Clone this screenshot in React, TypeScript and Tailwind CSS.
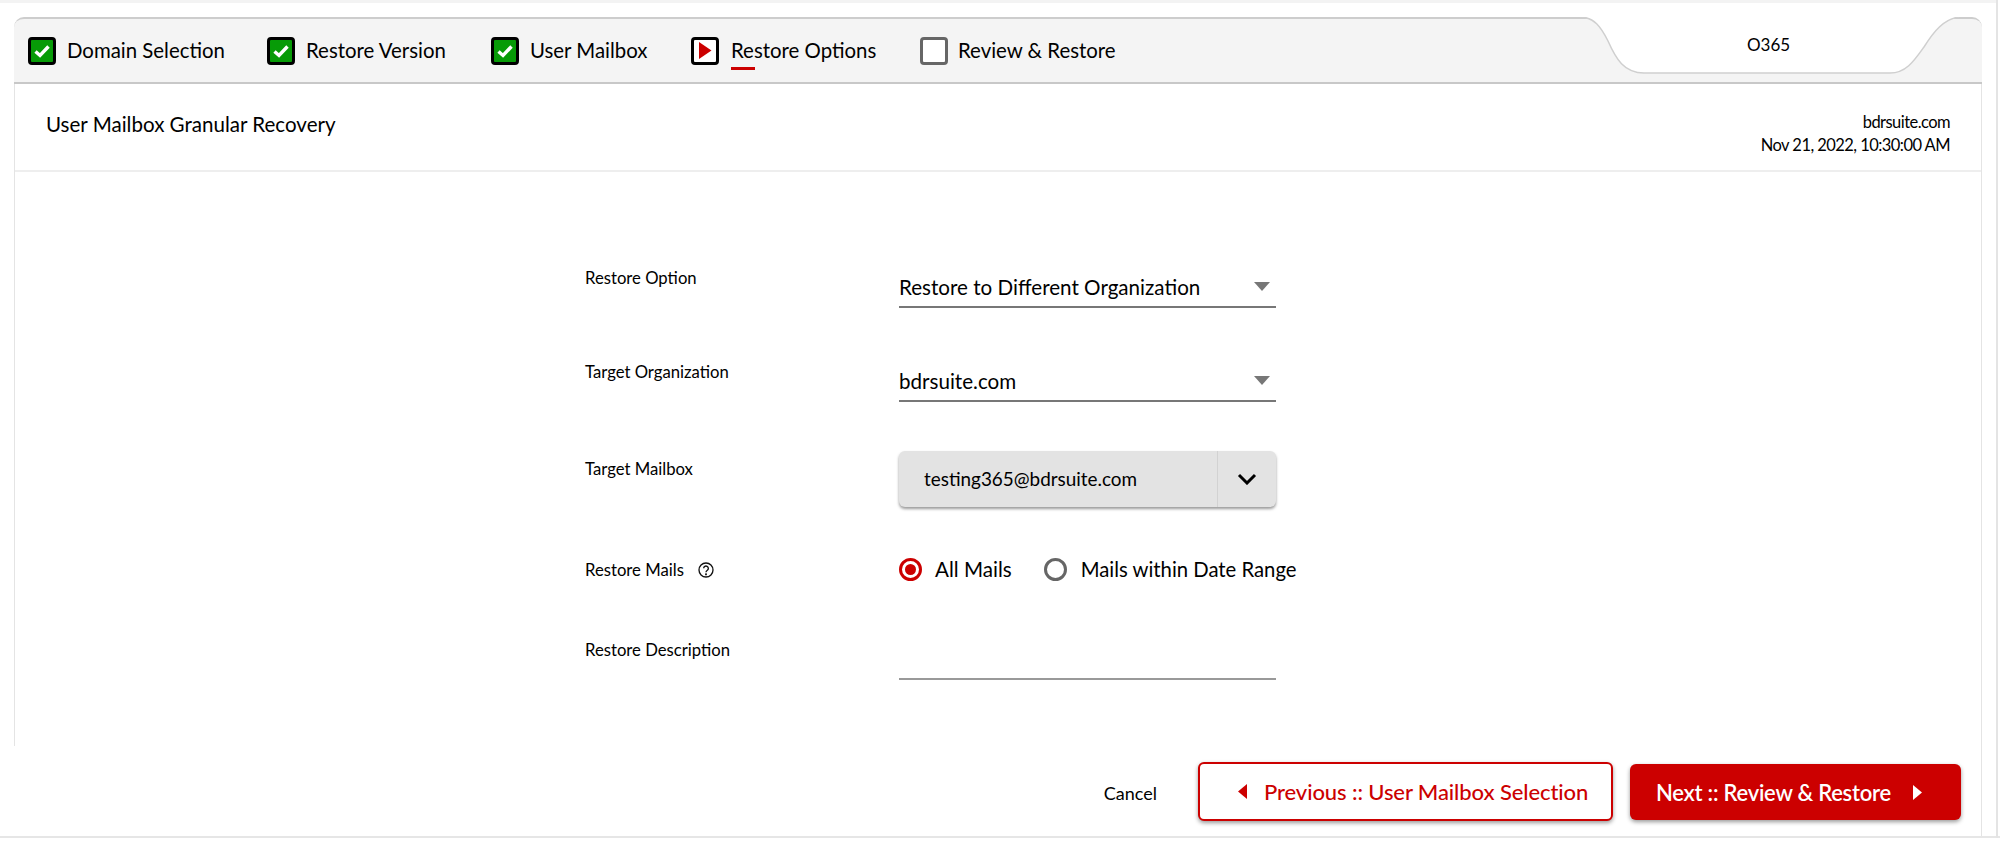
import React from "react";

function Check({ state }: { state: "done" | "active" | "todo" }) {
  if (state === "done")
    return (
      <span className="w-[28px] h-[28px] rounded-[4px] border-[3px] border-black bg-[#079b07] flex items-center justify-center shrink-0">
        <svg width="16" height="14" viewBox="0 0 16 14"><path d="M1.5 7.5 L6 11.5 L14.5 2.5" fill="none" stroke="#fff" strokeWidth="3.4" /></svg>
      </span>
    );
  if (state === "active")
    return (
      <span className="w-[28px] h-[28px] rounded-[4px] border-[3px] border-black bg-white flex items-center justify-center shrink-0">
        <svg width="13" height="17" viewBox="0 0 13 17"><path d="M0 0 L12.5 8.5 L0 17 Z" fill="#cc0000" /></svg>
      </span>
    );
  return <span className="w-[28px] h-[28px] rounded-[4px] border-[3px] border-[#666] bg-white shrink-0" />;
}

function Step({ state, label, className }: { state: "done" | "active" | "todo"; label: string; className: string }) {
  return (
    <div className={"flex items-center " + className}>
      <Check state={state} />
      <span className="relative text-[20.4px] leading-[28px] text-black -mt-[2px]">
        {label}
        {state === "active" && <span className="absolute left-0 top-[31px] w-[24px] h-[3px] bg-[#cc0000]" />}
      </span>
    </div>
  );
}

function Row({ label, labelTop, mt, children }: { label: React.ReactNode; labelTop: string; mt: string; children: React.ReactNode }) {
  return (
    <div className={"flex items-start " + mt}>
      <div className={"ml-[1px] w-[314px] text-[16.7px] leading-[20px] text-black flex items-center " + labelTop}>{label}</div>
      {children}
    </div>
  );
}

function Select({ value }: { value: string }) {
  return (
    <div className="w-[377px] h-[45px] border-b-2 border-[#777] flex items-center justify-between pr-[6px] pt-[4px]">
      <span className="text-[20.6px] leading-[28px] text-black">{value}</span>
      <svg width="16" height="9" viewBox="0 0 16 9"><path d="M0 0 H16 L8 9 Z" fill="#777" /></svg>
    </div>
  );
}

export default function App() {
  return (
    <div className="w-[2000px] h-[843px] bg-white overflow-hidden font-[Lato,sans-serif] flex flex-col relative">
      <div className="h-[3px] w-[1996px] bg-[#f3f3f3] shrink-0" />
      <div className="h-[14px] shrink-0" />
      <div className="ml-[14px] w-[1968px] h-[67px] shrink-0 bg-[#f4f4f4] border-t-2 border-[#cdcdcd] border-b-2 border-b-[#c8c8c8] rounded-t-[10px] relative flex items-center">
        <Step state="done" label="Domain Selection" className="ml-[14px] w-[239px] gap-[11px]" />
        <Step state="done" label="Restore Version" className="w-[224px] gap-[11px]" />
        <Step state="done" label="User Mailbox" className="w-[200px] gap-[11px]" />
        <Step state="active" label="Restore Options" className="w-[229px] gap-[12px]" />
        <Step state="todo" label="Review & Restore" className="gap-[10px]" />
        <svg className="absolute left-[1560px] top-[-2px]" width="400" height="58" viewBox="0 0 400 58">
          <path d="M6 0 C20 0 27 10 34 24 C42 42 50 56 70 56 H316 C332 56 340 44 350 30 C360 14 370 2 385 0 Z" fill="#fff" stroke="none" />
          <path d="M6 0 C20 0 27 10 34 24 C42 42 50 56 70 56 H316 C332 56 340 44 350 30 C360 14 370 2 385 0" fill="none" stroke="#cfcfcf" strokeWidth="1.5" />
        </svg>
        <span className="absolute left-[1733px] top-[16px] w-[42px] text-center text-[17px] leading-[20px] text-black">O365</span>
      </div>
      <div className="ml-[14px] w-[1968px] h-[662px] shrink-0 border-x border-[#e4e4e4]">
        <div className="h-[88px] border-b-2 border-[#eeeeee] flex justify-between pl-[31px] pr-[31px]">
          <span className="text-[20.55px] leading-[28px] text-black mt-[26px]">User Mailbox Granular Recovery</span>
          <div className="text-right text-[16.5px] tracking-[-0.55px] leading-[23px] text-black mt-[27px]">
            <div>bdrsuite.com</div>
            <div>Nov 21, 2022, 10:30:00 AM</div>
          </div>
        </div>
        <div className="pl-[569px] pt-[91px]">
          <Row label="Restore Option" labelTop="pt-[5px]" mt="">
            <Select value="Restore to Different Organization" />
          </Row>
          <Row label="Target Organization" labelTop="pt-[5px]" mt="mt-[49px]">
            <Select value="bdrsuite.com" />
          </Row>
          <Row label="Target Mailbox" labelTop="pt-[8px]" mt="mt-[49px]">
            <div className="w-[377px] h-[56px] rounded-[6px] bg-[#e3e3e3] shadow-[0_2px_3px_rgba(0,0,0,0.4)] flex items-center">
              <span className="flex-1 pl-[25px] text-[18.9px] leading-[26px] text-black">testing365@bdrsuite.com</span>
              <span className="w-[59px] h-full border-l border-[#d2d2d2] flex items-center justify-center">
                <svg width="20" height="12" viewBox="0 0 20 12"><path d="M2 2 L10 10 L18 2" fill="none" stroke="#000" strokeWidth="3" /></svg>
              </span>
            </div>
          </Row>
          <Row
            label={
              <>
                <span>Restore Mails</span>
                <svg className="ml-[14px]" width="16" height="16" viewBox="0 0 24 24" fill="none" stroke="#111" strokeWidth="2"><circle cx="12" cy="12" r="10.5" /><path d="M8.5 9.5a3.5 3.5 0 1 1 5.5 2.9c-1.2.8-2 1.4-2 2.9" /><circle cx="12" cy="18.5" r="0.6" fill="#111" /></svg>
              </>
            }
            labelTop="pt-[0px]"
            mt="mt-[53px]"
          >
            <div className="flex items-center -mt-[3px]">
              <span className="w-[23px] h-[23px] rounded-full border-[3px] border-[#cc0000] flex items-center justify-center">
                <span className="w-[11px] h-[11px] rounded-full bg-[#cc0000]" />
              </span>
              <span className="ml-[13px] text-[20.6px] leading-[24px] text-black">All Mails</span>
              <span className="ml-[32px] w-[23px] h-[23px] rounded-full border-[3px] border-[#666]" />
              <span className="ml-[14px] text-[20.3px] leading-[24px] text-black">Mails within Date Range</span>
            </div>
          </Row>
          <Row label="Restore Description" labelTop="pt-[0px]" mt="mt-[59px]">
            <div className="w-[377px] h-[50px] -mt-[10px] border-b-2 border-[#999]" />
          </Row>
        </div>
      </div>
      <div className="w-full h-[92px] shrink-0 border-b-2 border-[#e6e6e6] pl-[14px] pr-[18px]">
        <div className="h-full border-r border-r-[#e4e4e4] flex items-start justify-end pr-[20px] pt-[16px]">
          <span className="text-[18px] leading-[22px] text-black mr-[41px] mt-[20px]">Cancel</span>
          <button className="w-[415px] h-[59px] rounded-[6px] border-2 border-[#cc0000] bg-white shadow-[0_2px_4px_rgba(0,0,0,0.4)] text-[#cc0000] text-[22px] tracking-[-0.1px] font-medium flex items-center pl-[38px] gap-[17px]">
            <svg width="9" height="15" viewBox="0 0 9 15"><path d="M9 0 V15 L0 7.5 Z" fill="#cc0000" /></svg>
            <span>Previous :: User Mailbox Selection</span>
          </button>
          <button className="ml-[17px] mt-[2px] w-[331px] h-[56px] rounded-[6px] bg-[#cc0000] shadow-[0_2px_4px_rgba(0,0,0,0.4)] text-white text-[22px] tracking-[-0.25px] font-semibold flex items-center pl-[26px] gap-[22px]">
            <span>Next :: Review &amp; Restore</span>
            <svg width="9" height="15" viewBox="0 0 9 15"><path d="M0 0 V15 L9 7.5 Z" fill="#fff" /></svg>
          </button>
        </div>
      </div>
      <div className="absolute left-[1996px] top-0 h-[838px] w-[2px] bg-[#e4e4e4]" />
    </div>
  );
}
